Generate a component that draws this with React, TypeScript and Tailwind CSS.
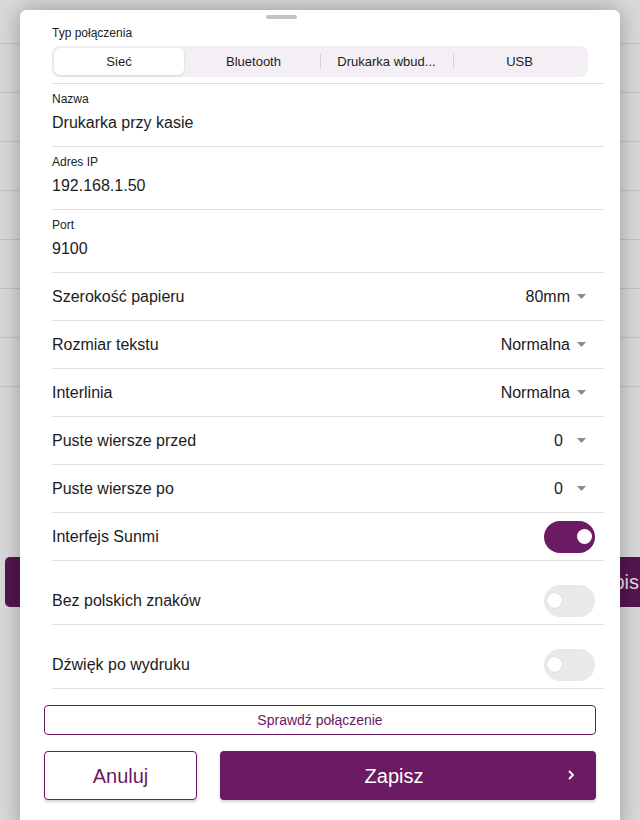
import React, { useState } from 'react';

function TextField({ label, value }: { label: string; value: string }) {
    return (
        <div className="pt-[7px] pb-[11px] border-b border-[#e0e0e0]">
            <div className="text-[12px] leading-[16px] text-[#222]">{label}</div>
            <div className="mt-[4px] text-[16px] leading-[24px] text-[#1c1c1c]">{value}</div>
        </div>
    );
}

function SelectRow({ label, value, narrow }: { label: string; value: string; narrow?: boolean }) {
    return (
        <div className="h-[48px] flex items-center justify-between border-b border-[#e0e0e0] pr-[18px]">
            <span className="text-[16px] text-[#1c1c1c]">{label}</span>
            <div className="flex items-center">
                <span className={`text-[16px] text-[#1c1c1c] ${narrow ? 'mr-[14px]' : 'mr-[7px]'}`}>
                    {value}
                </span>
                <svg width="9" height="5" viewBox="0 0 9 5">
                    <path d="M0 0 L9 0 L4.5 5 Z" fill="#8a8a8a" />
                </svg>
            </div>
        </div>
    );
}

function Toggle({ on, onChange }: { on: boolean; onChange: () => void }) {
    return (
        <button
            type="button"
            onClick={onChange}
            className={`w-[51px] h-[32px] rounded-full flex items-center px-[3px] ${
                on ? 'bg-[#6a1b63] justify-end' : 'bg-[#e9e9e9] justify-start'
            }`}
        >
            <span
                className={`block w-[15px] h-[15px] rounded-full bg-white ${
                    on ? '' : 'shadow-[0_0_1px_rgba(0,0,0,0.25)]'
                }`}
            />
        </button>
    );
}

function ToggleRow({
    label,
    on,
    onChange,
    tall,
}: {
    label: string;
    on: boolean;
    onChange: () => void;
    tall?: boolean;
}) {
    return (
        <div className={`border-b border-[#e0e0e0] ${tall ? 'pt-[16px]' : ''}`}>
            <div className="h-[47px] flex items-center justify-between pr-[9px]">
                <span className="text-[16px] text-[#1c1c1c]">{label}</span>
                <Toggle on={on} onChange={onChange} />
            </div>
        </div>
    );
}

export default function App() {
    const [tab, setTab] = useState(0);
    const [sunmi, setSunmi] = useState(true);
    const [noPl, setNoPl] = useState(false);
    const [sound, setSound] = useState(false);

    const tabs = ['Sieć', 'Bluetooth', 'Drukarka wbud...', 'USB'];

    return (
        <div
            className="relative w-[640px] h-[820px] overflow-hidden bg-[#d9d9d9]"
            style={{ fontFamily: '"Liberation Sans", Arial, sans-serif' }}
        >
            {/* page behind the sheet */}
            <div className="flex flex-col">
                <div className="h-[44px] border-b border-[#c3c3c3]" />
                {[0, 1, 2, 3, 4, 5, 6].map((i) => (
                    <div key={i} className="h-[49px] border-b border-[#c3c3c3]" />
                ))}
                <div className="mt-[170px] ml-[5px] w-[700px] h-[50px] rounded-[5px] bg-[#541650] flex items-center justify-end pr-[66px]">
                    <span className="text-[20px] text-[#e6dde5]">Opis</span>
                </div>
            </div>

            {/* bottom sheet */}
            <div className="absolute left-[20px] top-[10px] w-[600px] h-[820px] bg-white rounded-t-[6px] shadow-[0_0_22px_rgba(0,0,0,0.3)]">
                <div className="pt-[5px]">
                    <div className="ml-[246px] w-[31px] h-[4px] rounded-full bg-[#c4c4c4]" />
                </div>

                <div className="pl-[32px] pr-[16px]">
                    <div className="pt-[6px] pb-[6px] border-b border-[#e0e0e0]">
                        <div className="text-[12px] leading-[16px] text-[#222]">Typ połączenia</div>
                        <div className="mt-[5px] mr-[16px] h-[31px] rounded-[8px] bg-[#f4eff5] p-[2px] flex">
                            {tabs.map((t, i) => {
                                const showSep = i > 0 && i !== tab && i - 1 !== tab;
                                return (
                                    <div key={t} className="flex-1 flex items-center relative">
                                        {showSep && (
                                            <div className="absolute left-0 top-[6px] h-[15px] w-px bg-[#d2d2d2]" />
                                        )}
                                        <button
                                            type="button"
                                            onClick={() => setTab(i)}
                                            className={`w-full h-full rounded-[6px] text-[13px] text-[#1c1c1c] whitespace-nowrap ${
                                                i === tab
                                                    ? 'bg-white mr-[3px] shadow-[0_1px_3px_rgba(0,0,0,0.12)]'
                                                    : ''
                                            }`}
                                        >
                                            {t}
                                        </button>
                                    </div>
                                );
                            })}
                        </div>
                    </div>

                    <TextField label="Nazwa" value="Drukarka przy kasie" />
                    <TextField label="Adres IP" value="192.168.1.50" />
                    <TextField label="Port" value="9100" />

                    <SelectRow label="Szerokość papieru" value="80mm" />
                    <SelectRow label="Rozmiar tekstu" value="Normalna" />
                    <SelectRow label="Interlinia" value="Normalna" />
                    <SelectRow label="Puste wiersze przed" value="0" narrow />
                    <SelectRow label="Puste wiersze po" value="0" narrow />

                    <ToggleRow label="Interfejs Sunmi" on={sunmi} onChange={() => setSunmi(!sunmi)} />
                    <ToggleRow label="Bez polskich znaków" on={noPl} onChange={() => setNoPl(!noPl)} tall />
                    <ToggleRow label="Dźwięk po wydruku" on={sound} onChange={() => setSound(!sound)} tall />
                </div>

                <div className="px-[24px] pt-[16px]">
                    <button
                        type="button"
                        className="w-full h-[30px] rounded-[4px] border border-[#6a1b63] text-[14px] text-[#6a1b63]"
                    >
                        Sprawdź połączenie
                    </button>

                    <div className="mt-[16px] flex gap-[23px]">
                        <button
                            type="button"
                            className="w-[153px] h-[49px] rounded-[4px] border border-[#6a1b63] bg-white text-[20px] text-[#6a1b63] shadow-[0_2px_3px_rgba(0,0,0,0.18)]"
                        >
                            Anuluj
                        </button>
                        <button
                            type="button"
                            className="relative flex-1 h-[49px] pr-[28px] rounded-[4px] bg-[#6a1b63] text-[20px] text-white shadow-[0_2px_3px_rgba(0,0,0,0.18)]"
                        >
                            Zapisz
                            <svg
                                className="absolute right-[21px] top-[19px]"
                                width="7"
                                height="10"
                                viewBox="0 0 7 10"
                            >
                                <path
                                    d="M1.5 1.5 L5 5 L1.5 8.5"
                                    fill="none"
                                    stroke="white"
                                    strokeWidth="1.8"
                                    strokeLinecap="round"
                                    strokeLinejoin="round"
                                />
                            </svg>
                        </button>
                    </div>
                </div>
            </div>
        </div>
    );
}
